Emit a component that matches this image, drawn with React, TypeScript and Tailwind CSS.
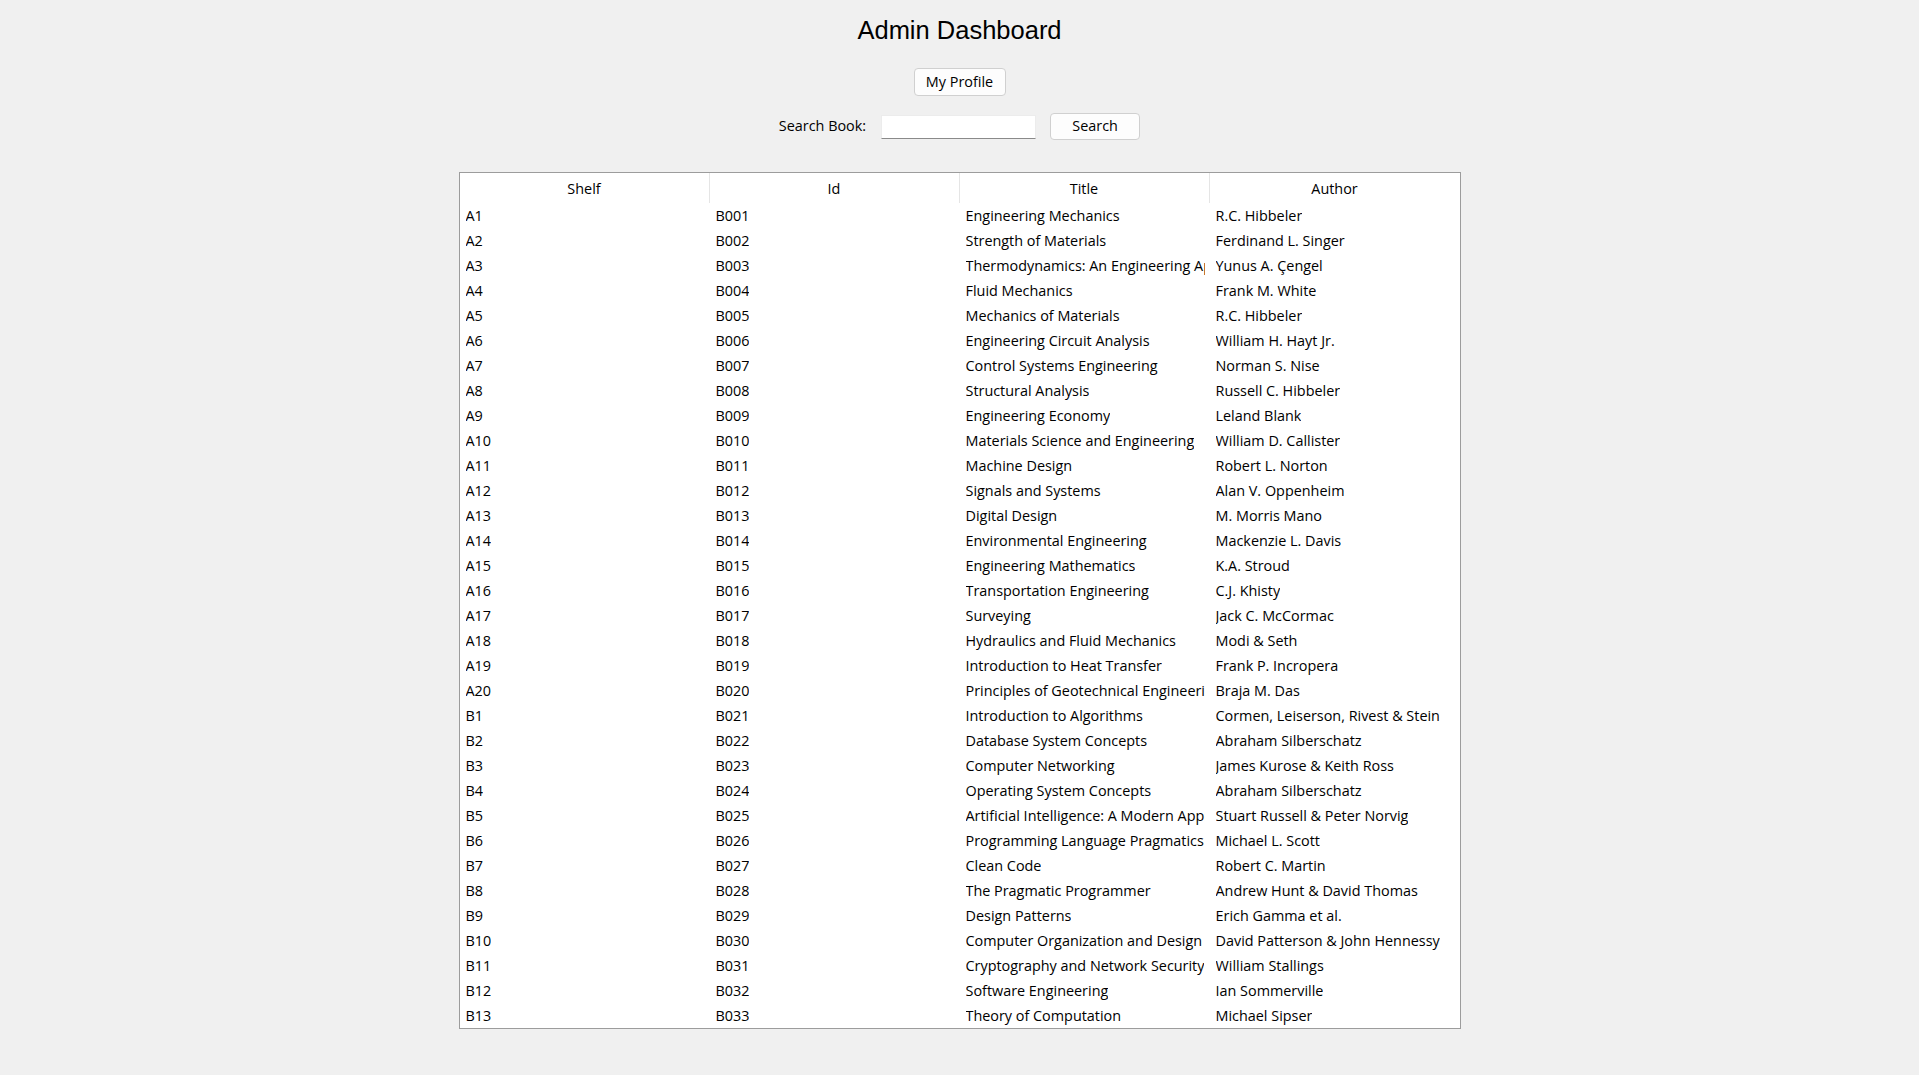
const books: [string, string, string, string][] = [
  ["A1", "B001", "Engineering Mechanics", "R.C. Hibbeler"],
  ["A2", "B002", "Strength of Materials", "Ferdinand L. Singer"],
  ["A3", "B003", "Thermodynamics: An Engineering Approach", "Yunus A. Çengel"],
  ["A4", "B004", "Fluid Mechanics", "Frank M. White"],
  ["A5", "B005", "Mechanics of Materials", "R.C. Hibbeler"],
  ["A6", "B006", "Engineering Circuit Analysis", "William H. Hayt Jr."],
  ["A7", "B007", "Control Systems Engineering", "Norman S. Nise"],
  ["A8", "B008", "Structural Analysis", "Russell C. Hibbeler"],
  ["A9", "B009", "Engineering Economy", "Leland Blank"],
  ["A10", "B010", "Materials Science and Engineering", "William D. Callister"],
  ["A11", "B011", "Machine Design", "Robert L. Norton"],
  ["A12", "B012", "Signals and Systems", "Alan V. Oppenheim"],
  ["A13", "B013", "Digital Design", "M. Morris Mano"],
  ["A14", "B014", "Environmental Engineering", "Mackenzie L. Davis"],
  ["A15", "B015", "Engineering Mathematics", "K.A. Stroud"],
  ["A16", "B016", "Transportation Engineering", "C.J. Khisty"],
  ["A17", "B017", "Surveying", "Jack C. McCormac"],
  ["A18", "B018", "Hydraulics and Fluid Mechanics", "Modi & Seth"],
  ["A19", "B019", "Introduction to Heat Transfer", "Frank P. Incropera"],
  ["A20", "B020", "Principles of Geotechnical Engineering", "Braja M. Das"],
  ["B1", "B021", "Introduction to Algorithms", "Cormen, Leiserson, Rivest & Stein"],
  ["B2", "B022", "Database System Concepts", "Abraham Silberschatz"],
  ["B3", "B023", "Computer Networking", "James Kurose & Keith Ross"],
  ["B4", "B024", "Operating System Concepts", "Abraham Silberschatz"],
  ["B5", "B025", "Artificial Intelligence: A Modern Approach", "Stuart Russell & Peter Norvig"],
  ["B6", "B026", "Programming Language Pragmatics", "Michael L. Scott"],
  ["B7", "B027", "Clean Code", "Robert C. Martin"],
  ["B8", "B028", "The Pragmatic Programmer", "Andrew Hunt & David Thomas"],
  ["B9", "B029", "Design Patterns", "Erich Gamma et al."],
  ["B10", "B030", "Computer Organization and Design", "David Patterson & John Hennessy"],
  ["B11", "B031", "Cryptography and Network Security", "William Stallings"],
  ["B12", "B032", "Software Engineering", "Ian Sommerville"],
  ["B13", "B033", "Theory of Computation", "Michael Sipser"],
];

const columns = ["Shelf", "Id", "Title", "Author"];

export default function App() {
  return (
    <div className="min-h-[1075px] w-full bg-[#f0f0f0] flex flex-col items-center font-['Open_Sans',sans-serif] text-[14.4px] text-black">
      <h1 className="mt-[16px] text-[25.5px] leading-[29px] font-['Liberation_Sans',Arial,sans-serif]">
        Admin Dashboard
      </h1>

      <button className="mt-[23px] w-[92px] h-[28px] bg-[#fdfdfd] border border-[#d0d0d0] rounded-[4px] leading-none pt-[1px]">
        My Profile
      </button>

      <div className="mt-[16px] flex items-center pt-[1px]">
        <span className="leading-none">Search Book:</span>
        <input className="ml-[15px] w-[155px] h-[24px] bg-white border border-[#ececec] border-b-[#8a8a8a] outline-none px-1" />
        <button className="ml-[14px] w-[90px] h-[27px] bg-[#fdfdfd] border border-[#d0d0d0] rounded-[4px] leading-none">
          Search
        </button>
      </div>

      <div className="mt-[32px] border border-[#9c9c9c] bg-white">
        <div className="grid grid-cols-[250px_250px_250px_250px] h-[30px]">
          {columns.map((c, i) => (
            <div
              key={c}
              className={
                "flex items-center justify-center pt-[1px] " +
                (i < 3 ? "border-r border-[#e5e5e5]" : "")
              }
            >
              {c}
            </div>
          ))}
        </div>
        {books.map((row) => (
          <div key={row[1]} className="grid grid-cols-[250px_250px_250px_250px] h-[25px]">
            {row.map((cell, j) => (
              <div key={j} className="pl-[6px] pr-[5px] flex items-center min-w-0">
                <div className="min-w-0 overflow-hidden whitespace-nowrap">{cell}</div>
              </div>
            ))}
          </div>
        ))}
      </div>
    </div>
  );
}
